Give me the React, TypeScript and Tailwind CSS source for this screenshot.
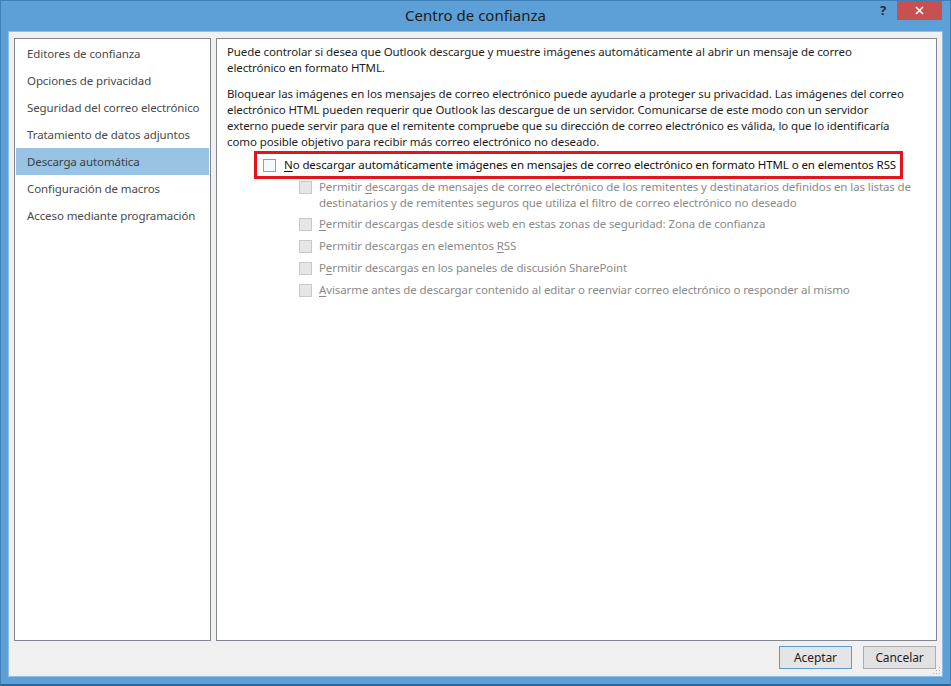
import React from "react";

const leftItems = [
  "Editores de confianza",
  "Opciones de privacidad",
  "Seguridad del correo electrónico",
  "Tratamiento de datos adjuntos",
  "Descarga automática",
  "Configuración de macros",
  "Acceso mediante programación",
];

function DisabledBox() {
  return <div className="w-[13px] h-[13px] shrink-0 border border-[#c9c9c9] bg-[#e6e6e6]" />;
}

function SubItem({ lines, tight }: { lines: React.ReactNode[]; tight?: boolean }) {
  return (
    <div className={tight ? "flex items-start gap-[7px] pt-[3px] pb-[2px]" : "flex items-start gap-[7px] py-[3px]"}>
      <div className="pt-[2px]">
        <DisabledBox />
      </div>
      <div className="text-[#8a8a8a]">
        {lines.map((l, i) => (
          <div key={i} className="h-[16px] whitespace-nowrap">
            {l}
          </div>
        ))}
      </div>
    </div>
  );
}

export default function App() {
  return (
    <div className="w-[951px] h-[686px] bg-[#5ca0d7] flex flex-col border border-[#3f7fb5] border-b-[2px] border-b-[#2d6699] font-['Noto_Sans',sans-serif] text-[11.5px] tracking-[-0.1px] leading-[16px] overflow-hidden">
      {/* Title bar */}
      <div className="relative h-[30px] shrink-0 flex items-center justify-center">
        <span className="text-[15px] text-[#1b1b1b] tracking-normal -mt-[3px]">Centro de confianza</span>
        <span className="absolute left-[879px] top-[1px] text-[13px] font-bold text-[#2b2b2b]">?</span>
        <div className="absolute left-[896px] top-[-1px] w-[45px] h-[20px] bg-[#c75050] flex items-center justify-center">
          <svg width="9" height="9" viewBox="0 0 9 9">
            <path d="M1 1 L8 8 M8 1 L1 8" stroke="#ffffff" strokeWidth="1.6" />
          </svg>
        </div>
      </div>

      {/* Client */}
      <div className="relative mx-[7px] h-[646px] bg-[#f0f0f0] border border-[#8fbde3] flex flex-col px-[5px] pt-[6px]">
        <div className="flex gap-[5px] h-[603px] shrink-0">
          {/* Left nav */}
          <div className="w-[197px] bg-white border border-[#828790] pt-[1px] px-[1px] flex flex-col">
            {leftItems.map((t, i) => (
              <div
                key={t}
                className={
                  i === 4
                    ? "h-[27px] flex items-center pl-[11px] bg-[#99c3e4] text-[#3d3d3d] whitespace-nowrap"
                    : "h-[27px] flex items-center pl-[11px] text-[#4a4a4a] whitespace-nowrap"
                }
              >
                {t}
              </div>
            ))}
          </div>

          {/* Right content */}
          <div className="flex-1 bg-white border border-[#828790] pl-[10px] pt-[5px] text-[#1e1e1e]">
            <div>
              <div className="whitespace-nowrap">
                Puede controlar si desea que Outlook descargue y muestre imágenes automáticamente al abrir un mensaje de correo
              </div>
              <div className="whitespace-nowrap">electrónico en formato HTML.</div>
            </div>
            <div className="mt-[10px]">
              <div className="whitespace-nowrap">
                Bloquear las imágenes en los mensajes de correo electrónico puede ayudarle a proteger su privacidad. Las imágenes del correo
              </div>
              <div className="whitespace-nowrap">
                electrónico HTML pueden requerir que Outlook las descargue de un servidor. Comunicarse de este modo con un servidor
              </div>
              <div className="whitespace-nowrap">
                externo puede servir para que el remitente compruebe que su dirección de correo electrónico es válida, lo que lo identificaría
              </div>
              <div className="whitespace-nowrap">como posible objetivo para recibir más correo electrónico no deseado.</div>
            </div>

            {/* Highlighted main option */}
            <div className="ml-[27px] mt-[1px] w-[649px] h-[28px] border-[3px] border-[#e3141c] flex items-center pl-[6px] gap-[8px]">
              <div className="w-[13px] h-[13px] shrink-0 border border-[#6aa8e0] bg-[#f4f9fe]" />
              <span className="whitespace-nowrap text-[#111]">
                <span className="underline underline-offset-2">N</span>o descargar automáticamente imágenes en mensajes de correo electrónico en formato HTML o en elementos RSS
              </span>
            </div>

            <div className="ml-[72px] -mt-[3px] flex flex-col">
              <SubItem
                tight
                lines={[
                  <>
                    Permitir <span className="underline underline-offset-2">d</span>escargas de mensajes de correo electrónico de los remitentes y destinatarios definidos en las listas de
                  </>,
                  <>destinatarios y de remitentes seguros que utiliza el filtro de correo electrónico no deseado</>,
                ]}
              />
              <SubItem
                lines={[
                  <>
                    <span className="underline underline-offset-2">P</span>ermitir descargas desde sitios web en estas zonas de seguridad: Zona de confianza
                  </>,
                ]}
              />
              <SubItem
                lines={[
                  <>
                    Permitir descargas en elementos <span className="underline underline-offset-2">R</span>SS
                  </>,
                ]}
              />
              <SubItem
                lines={[
                  <>
                    P<span className="underline underline-offset-2">e</span>rmitir descargas en los paneles de discusión SharePoint
                  </>,
                ]}
              />
              <SubItem
                lines={[
                  <>
                    <span className="underline underline-offset-2">A</span>visarme antes de descargar contenido al editar o reenviar correo electrónico o responder al mismo
                  </>,
                ]}
              />
            </div>
          </div>
        </div>

        {/* Buttons */}
        <div className="flex justify-end gap-[11px] pt-[5px] pr-[1px]">
          <button className="w-[73px] h-[23px] border border-[#5b9bd5] bg-[#e5e5e5] text-[#1e1e1e] text-[12px] leading-none">
            Aceptar
          </button>
          <button className="w-[73px] h-[23px] border border-[#adadad] bg-[#e1e1e1] text-[#1e1e1e] text-[12px] leading-none">
            Cancelar
          </button>
        </div>

        {/* Resize grip */}
        <svg className="absolute right-[1px] bottom-[1px]" width="9" height="9" viewBox="0 0 9 9">
          <rect x="7" y="1" width="1" height="1" fill="#b0b0b0" />
          <rect x="4" y="4" width="1" height="1" fill="#b0b0b0" />
          <rect x="7" y="4" width="1" height="1" fill="#b0b0b0" />
          <rect x="1" y="7" width="1" height="1" fill="#b0b0b0" />
          <rect x="4" y="7" width="1" height="1" fill="#b0b0b0" />
          <rect x="7" y="7" width="1" height="1" fill="#b0b0b0" />
        </svg>
      </div>
    </div>
  );
}
